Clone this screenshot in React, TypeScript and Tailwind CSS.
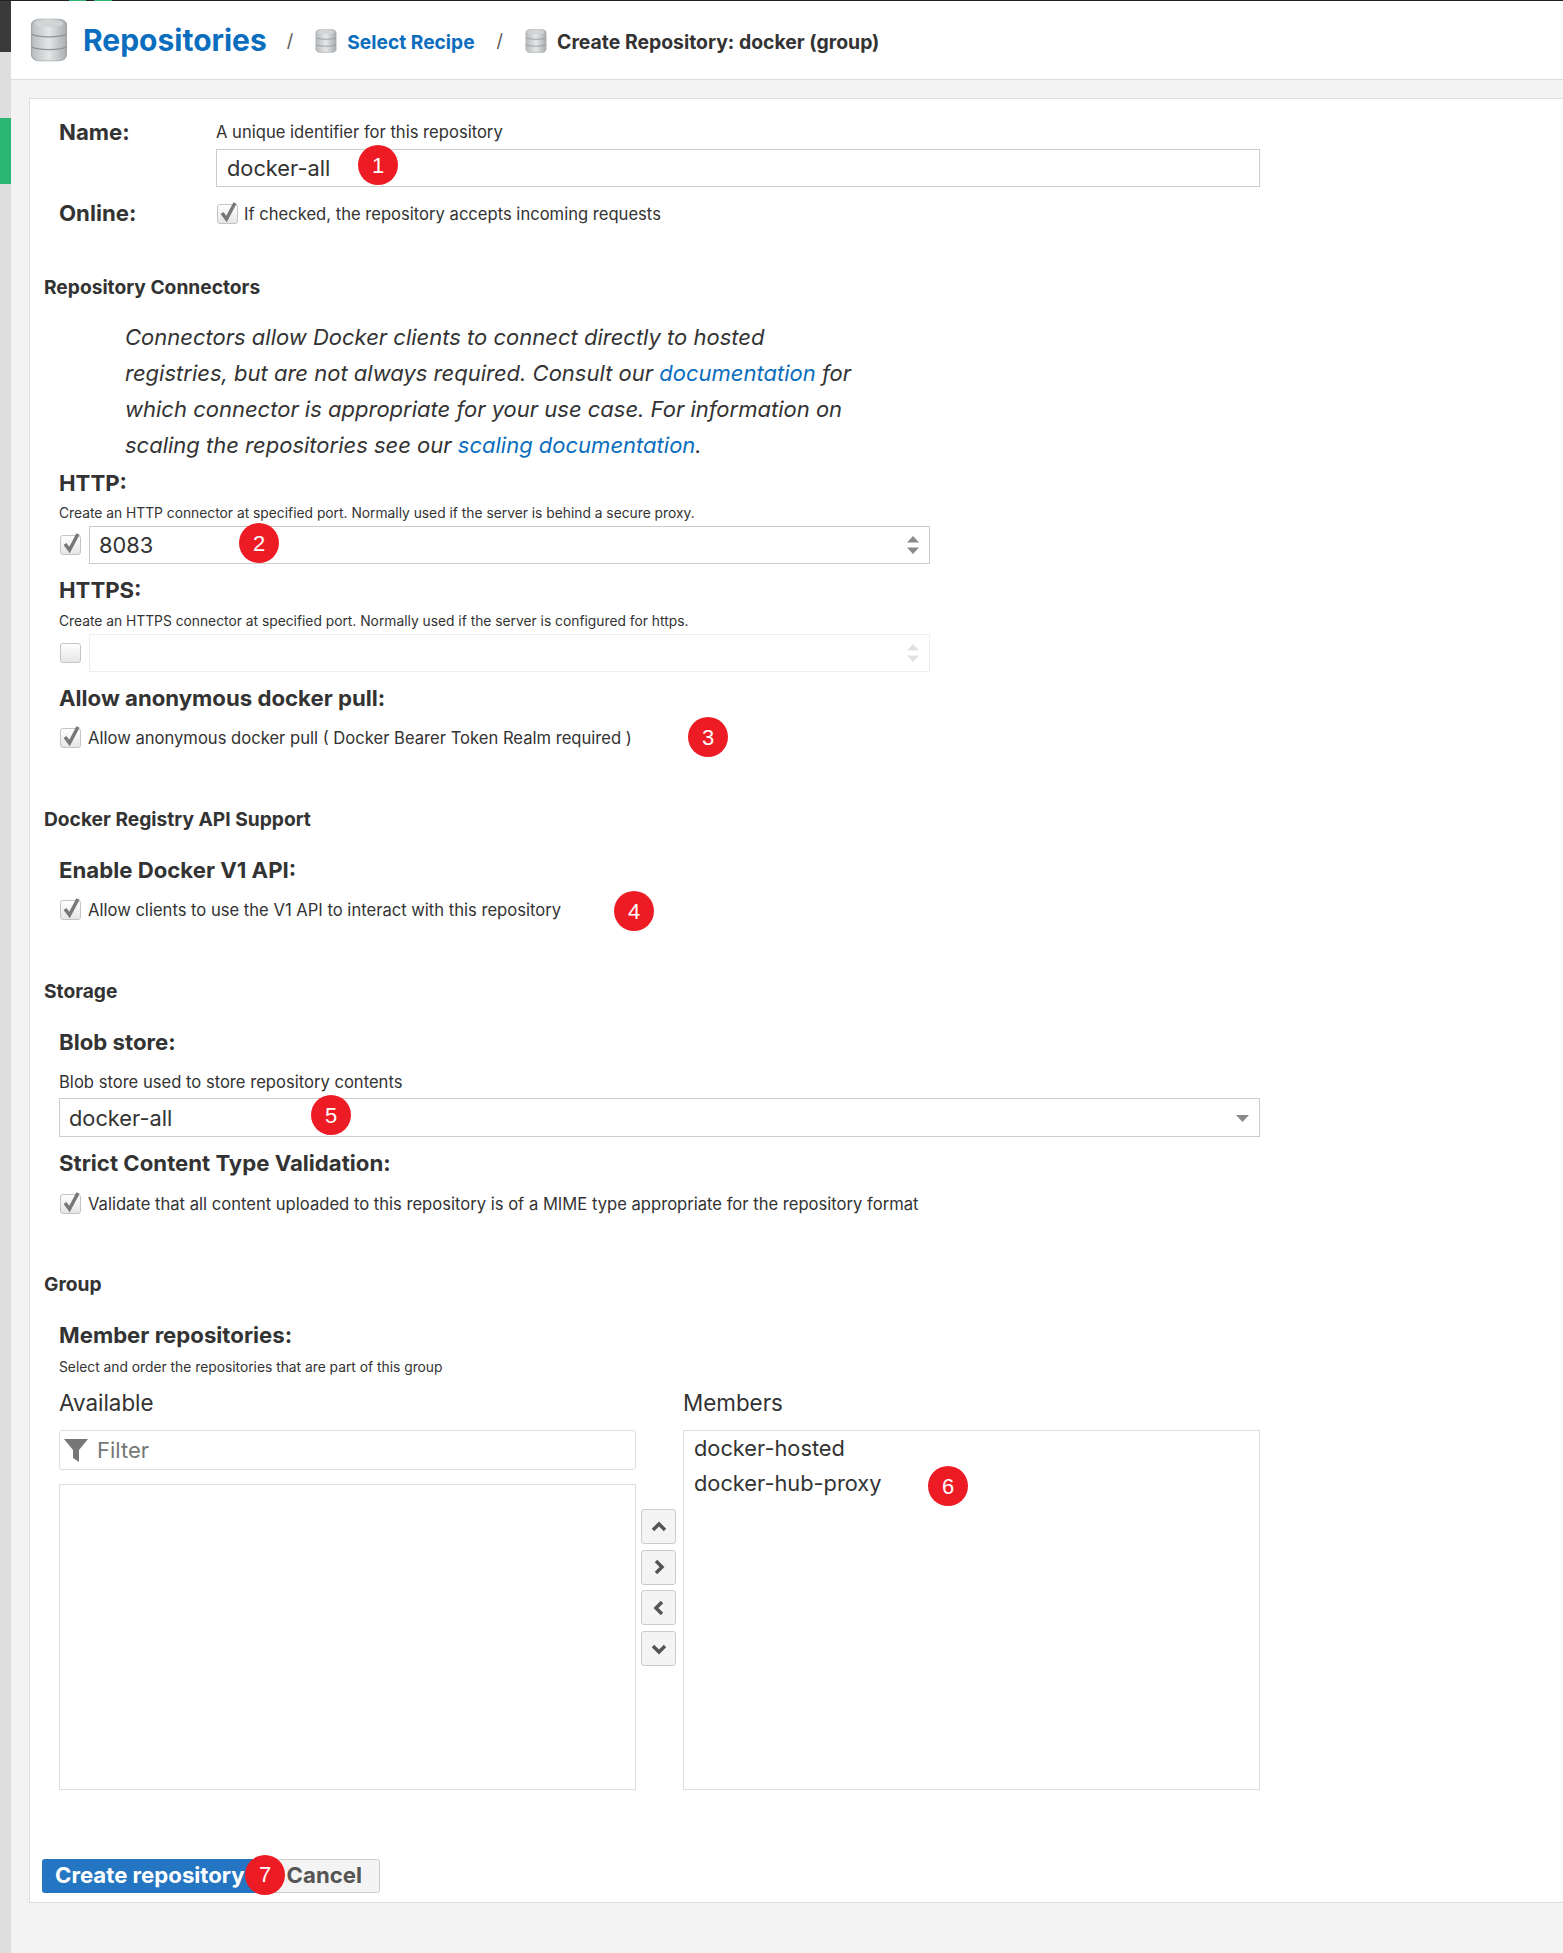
import React from 'react';

const DbIcon = ({ className }: { className: string }) => (
  <svg className={className} viewBox="0 0 24 38" preserveAspectRatio="none">
    <defs>
      <linearGradient id="db" x1="0" x2="1" y1="0" y2="0">
        <stop offset="0" stopColor="#b9bdc0" />
        <stop offset="0.5" stopColor="#e4e6e7" />
        <stop offset="1" stopColor="#a9adb0" />
      </linearGradient>
    </defs>
    <rect x="1" y="1" width="22" height="36" rx="5" fill="url(#db)" stroke="#a2a6a8" strokeWidth="0.8" />
    <ellipse cx="12" cy="5" rx="9" ry="3" fill="#d2d5d6" />
    <path d="M1 14c4 3 18 3 22 0M1 25c4 3 18 3 22 0" fill="none" stroke="#8f9496" strokeWidth="1" />
  </svg>
);

const Check = ({ on = true }: { on?: boolean }) => (
  <div className="relative h-[20px] w-[21px] shrink-0 rounded-[3px] border border-[#c4c4c4] bg-gradient-to-b from-white to-[#e6e6e6]">
    {on && (
      <svg className="absolute -top-[4px] left-[1px] h-[22px] w-[19px]" viewBox="0 0 19 22">
        <path d="M3 12l4.500 6L16 2" fill="none" stroke="#777" strokeWidth="3.500" />
      </svg>
    )}
  </div>
);

const Spinner = ({ faded = false }: { faded?: boolean }) => (
  <svg className={`h-[22px] w-[14px] ${faded ? 'opacity-25' : ''}`} viewBox="0 0 14 22">
    <path d="M7 2l6 6.500H1zM1 13.500h12L7 20z" fill="#8a8a8a" />
  </svg>
);

const Badge = ({ n, className }: { n: number; className: string }) => (
  <div className={`absolute flex h-[40px] w-[40px] items-center justify-center rounded-full bg-[#ed1c24] text-[22px] font-normal text-white [font-family:'Liberation_Sans',sans-serif] ${className}`}>
    {n}
  </div>
);

const Section = ({ mt, children }: { mt: string; children: React.ReactNode }) => (
  <h3 className={`-ml-[1px] h-[24px] text-[19.200px] leading-[24px] font-bold text-[#333] ${mt}`}>{children}</h3>
);

const Label = ({ mt, children }: { mt: string; children: React.ReactNode }) => (
  <div className={`ml-[14px] h-[26px] text-[22.200px] leading-[26px] font-bold text-[#333] ${mt}`}>{children}</div>
);

const Help = ({ mt, children }: { mt: string; children: React.ReactNode }) => (
  <div className={`ml-[14px] h-[18px] text-[13.800px] leading-[18px] text-[#333] ${mt}`}>{children}</div>
);

const CheckRow = ({ mt, children }: { mt: string; children: React.ReactNode }) => (
  <div className={`relative ml-[14px] flex h-[24px] items-center gap-[7px] text-[16.600px] text-[#333] ${mt}`}>
    <div className="ml-[1px]">
      <Check />
    </div>
    <span>{children}</span>
  </div>
);

const ShuttleButton = ({ d }: { d: string }) => (
  <button className="flex h-[35px] w-[35px] items-center justify-center rounded-[3px] border border-[#ccc] bg-[#f4f4f4]">
    <svg className="h-[16px] w-[16px]" viewBox="0 0 16 16">
      <path d={d} fill="none" stroke="#555" strokeWidth="3.500" />
    </svg>
  </button>
);

export default function App() {
  return (
    <div className="flex h-[1953px] w-[1563px] flex-col overflow-hidden bg-[#f3f3f3] [font-family:Inter,sans-serif]">
      <div className="flex h-px shrink-0 bg-[#222]">
        <div className="ml-[69px] w-[17px] bg-[#2bb673]" />
        <div className="ml-[8px] w-[18px] bg-[#2bb673]" />
      </div>
      <div className="flex flex-1">
        <aside className="flex w-[11px] shrink-0 flex-col bg-[#dedede]">
          <div className="h-[51px] bg-[#3a3a3a]" />
          <div className="mt-[66px] h-[66px] bg-[#2bb673]" />
        </aside>
        <main className="min-w-0 flex-1">
          <header className="flex h-[79px] items-center border-b border-[#ddd] bg-white pl-[19px]">
            <DbIcon className="h-[44px] w-[38px]" />
            <span className="ml-[15px] text-[30px] font-bold text-[#0b6dbd]">Repositories</span>
            <span className="ml-[20px] text-[18px] text-[#555]">/</span>
            <DbIcon className="mt-[2px] ml-[22px] h-[24px] w-[22px]" />
            <span className="mt-[4px] ml-[10px] text-[19.200px] font-bold text-[#0b6dbd]">Select Recipe</span>
            <span className="ml-[22px] text-[18px] text-[#555]">/</span>
            <DbIcon className="mt-[2px] ml-[22px] h-[24px] w-[22px]" />
            <span className="mt-[5px] ml-[10px] text-[19.400px] font-bold text-[#333]">Create Repository: docker (group)</span>
          </header>

          <div className="mt-[18px] ml-[18px] h-[1805px] border-y border-l border-[#ddd] bg-white pl-[15px]">
            <div className="ml-[14px] flex pt-[23px]">
              <div className="w-[157px] text-[22.200px] leading-[20px] font-bold text-[#333]">Name:</div>
              <div className="w-[1044px]">
                <div className="h-[20px] text-[16.600px] leading-[20px] text-[#333]">A unique identifier for this repository</div>
                <div className="relative mt-[7px] flex h-[38px] items-center border border-[#ccc] px-[10px] text-[21.800px] text-[#333]">
                  docker-all
                  <Badge n={1} className="left-[141px] -top-[5px]" />
                </div>
              </div>
            </div>
            <div className="mt-[14px] ml-[14px] flex h-[26px] items-center">
              <div className="-mt-[2px] w-[157px] text-[22.200px] font-bold text-[#333]">Online:</div>
              <div className="flex items-center gap-[6px] pl-[1px] text-[16.600px] text-[#333]">
                <Check />
                If checked, the repository accepts incoming requests
              </div>
            </div>

            <Section mt="mt-[48px]">Repository Connectors</Section>
            <p className="mt-[20px] ml-[80px] w-[745px] text-[22px] leading-[36px] text-[#333] italic">
              Connectors allow Docker clients to connect directly to hosted registries, but are not always required. Consult our{' '}
              <span className="text-[#0b6dbd]">documentation</span> for which connector is appropriate for your use case. For information on
              scaling the repositories see our <span className="text-[#0b6dbd]">scaling documentation</span>.
            </p>

            <Label mt="mt-[7px]">HTTP:</Label>
            <Help mt="mt-[8px]">Create an HTTP connector at specified port. Normally used if the server is behind a secure proxy.</Help>
            <div className="relative mt-[4px] ml-[15px] flex w-[870px] items-center gap-[8px]">
              <Check />
              <div className="flex h-[38px] flex-1 items-center justify-between border border-[#ccc] pr-[9px] pl-[9px] text-[21.800px] text-[#333]">
                8083
                <Spinner />
              </div>
              <Badge n={2} className="left-[179px] -top-[3px]" />
            </div>

            <Label mt="mt-[13px]">HTTPS:</Label>
            <Help mt="mt-[9px]">Create an HTTPS connector at specified port. Normally used if the server is configured for https.</Help>
            <div className="mt-[4px] ml-[15px] flex w-[870px] items-center gap-[8px]">
              <Check on={false} />
              <div className="flex h-[38px] flex-1 items-center justify-end border border-[#eee] pr-[9px]">
                <Spinner faded />
              </div>
            </div>

            <Label mt="mt-[13px]">Allow anonymous docker pull:</Label>
            <CheckRow mt="mt-[15px]">
              Allow anonymous docker pull ( Docker Bearer Token Realm required )
              <Badge n={3} className="left-[629px] -top-[9px]" />
            </CheckRow>

            <Section mt="mt-[57px]">Docker Registry API Support</Section>
            <Label mt="mt-[26px]">Enable Docker V1 API:</Label>
            <CheckRow mt="mt-[15px]">
              Allow clients to use the V1 API to interact with this repository
              <Badge n={4} className="left-[555px] -top-[7px]" />
            </CheckRow>

            <Section mt="mt-[57px]">Storage</Section>
            <Label mt="mt-[26px]">Blob store:</Label>
            <Help mt="mt-[18px]">
              <span className="text-[16.600px]">Blob store used to store repository contents</span>
            </Help>
            <div className="relative mt-[7px] ml-[14px] flex h-[39px] w-[1201px] items-center justify-between border border-[#ccc] pt-[2px] pr-[10px] pl-[9px] text-[21.800px] text-[#333]">
              docker-all
              <svg className="h-[7px] w-[13px]" viewBox="0 0 13 7">
                <path d="M0 0h13L6.500 7z" fill="#8a8a8a" />
              </svg>
              <Badge n={5} className="left-[251px] -top-[4px]" />
            </div>
            <Label mt="mt-[13px]">Strict Content Type Validation:</Label>
            <CheckRow mt="mt-[16px]">Validate that all content uploaded to this repository is of a MIME type appropriate for the repository format</CheckRow>

            <Section mt="mt-[56px]">Group</Section>
            <Label mt="mt-[26px]">Member repositories:</Label>
            <Help mt="mt-[10px]">Select and order the repositories that are part of this group</Help>

            <div className="mt-[15px] ml-[14px] flex w-[1201px]">
              <div className="w-[577px]">
                <div className="h-[24px] text-[22.400px] leading-[24px] text-[#333]">Available</div>
                <div className="mt-[15px] flex h-[40px] items-center rounded-[3px] border border-[#ddd] pl-[4px] text-[22px] text-[#777]">
                  <svg className="h-[24px] w-[24px]" viewBox="0 0 24 24">
                    <path d="M0 1h24L15 12v12l-6-4V12z" fill="#777" />
                  </svg>
                  <span className="ml-[9px]">Filter</span>
                </div>
                <div className="mt-[14px] h-[306px] border border-[#ddd]" />
              </div>
              <div className="mt-[118px] ml-[5px] flex w-[35px] flex-col gap-[5.700px]">
                <ShuttleButton d="M2 11l6-6 6 6" />
                <ShuttleButton d="M5 2l6 6-6 6" />
                <ShuttleButton d="M11 2L5 8l6 6" />
                <ShuttleButton d="M2 5l6 6 6-6" />
              </div>
              <div className="ml-[7px] w-[577px]">
                <div className="h-[24px] text-[22.400px] leading-[24px] text-[#333]">Members</div>
                <div className="relative mt-[15px] h-[360px] border border-[#ddd] pl-[10px] text-[21.800px] leading-[35px] text-[#333]">
                  <div>docker-hosted</div>
                  <div>docker-hub-proxy</div>
                  <Badge n={6} className="left-[244px] top-[35px]" />
                </div>
              </div>
            </div>

            <div className="relative mt-[69px] -ml-[3px] flex h-[34px] w-[338px] text-[22.200px] leading-[30px] font-bold">
              <button className="h-full w-[228px] rounded-l-[3px] bg-[#2476c3] pb-[3px] pl-[13px] text-left text-white">Create repository</button>
              <button className="h-full flex-1 rounded-r-[3px] border border-[#ccc] bg-[#f4f4f4] pr-[17px] pb-[3px] text-right text-[#555]">Cancel</button>
              <Badge n={7} className="left-[203px] -top-[4px]" />
            </div>
          </div>
        </main>
      </div>
    </div>
  );
}
